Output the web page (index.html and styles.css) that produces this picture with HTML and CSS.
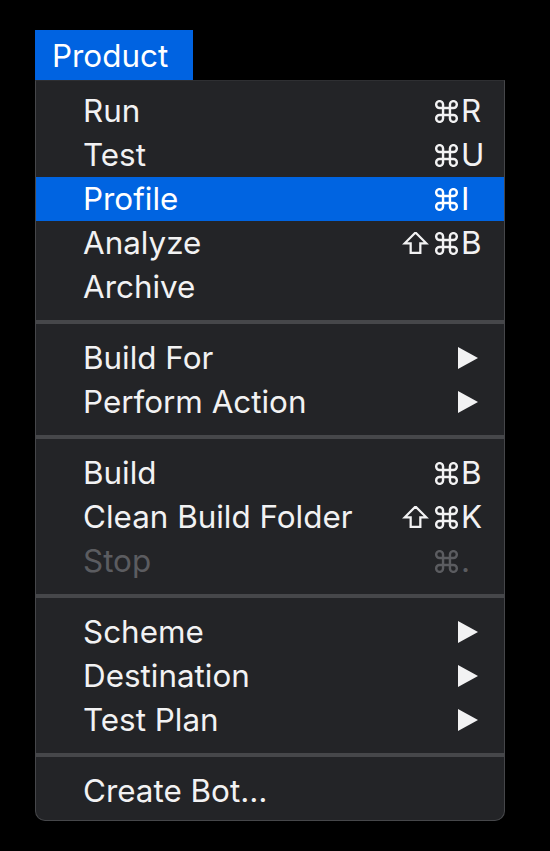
FILE: index.html
```html
<!DOCTYPE html>
<html lang="en">
<head>
<meta charset="utf-8">
<title>Product menu</title>
<link rel="stylesheet" href="styles.css">
</head>
<body>
<div class="screen">
  <div class="menubar">
    <div class="menu-title">Product</div>
  </div>
  <div class="menu">
    <div class="group">
      <div class="item"><span class="label">Run</span><span class="mod"></span><span class="mod"><svg class="cmd" viewBox="2 2 20 20"><path d="M9 9V6a3 3 0 1 0-3 3H18a3 3 0 1 0-3-3V18a3 3 0 1 0 3-3H6a3 3 0 1 0 3 3Z"/></svg></span><span class="key">R</span></div>
      <div class="item"><span class="label">Test</span><span class="mod"></span><span class="mod"><svg class="cmd" viewBox="2 2 20 20"><path d="M9 9V6a3 3 0 1 0-3 3H18a3 3 0 1 0-3-3V18a3 3 0 1 0 3-3H6a3 3 0 1 0 3 3Z"/></svg></span><span class="key">U</span></div>
      <div class="item selected"><span class="label">Profile</span><span class="mod"></span><span class="mod"><svg class="cmd" viewBox="2 2 20 20"><path d="M9 9V6a3 3 0 1 0-3 3H18a3 3 0 1 0-3-3V18a3 3 0 1 0 3-3H6a3 3 0 1 0 3 3Z"/></svg></span><span class="key">I</span></div>
      <div class="item"><span class="label">Analyze</span><span class="mod"><svg class="shift" viewBox="1 1 22 20.5"><path d="M12 1.5 22 11.5H16.5V20.5H7.5V11.5H2Z"/></svg></span><span class="mod"><svg class="cmd" viewBox="2 2 20 20"><path d="M9 9V6a3 3 0 1 0-3 3H18a3 3 0 1 0-3-3V18a3 3 0 1 0 3-3H6a3 3 0 1 0 3 3Z"/></svg></span><span class="key">B</span></div>
      <div class="item"><span class="label">Archive</span></div>
    </div>
    <div class="separator"></div>
    <div class="group">
      <div class="item"><span class="label">Build For</span><span class="submenu"><svg class="arrow" viewBox="0 0 20 22"><path d="M0 0 20 11 0 22Z"/></svg></span></div>
      <div class="item"><span class="label">Perform Action</span><span class="submenu"><svg class="arrow" viewBox="0 0 20 22"><path d="M0 0 20 11 0 22Z"/></svg></span></div>
    </div>
    <div class="separator"></div>
    <div class="group">
      <div class="item"><span class="label">Build</span><span class="mod"></span><span class="mod"><svg class="cmd" viewBox="2 2 20 20"><path d="M9 9V6a3 3 0 1 0-3 3H18a3 3 0 1 0-3-3V18a3 3 0 1 0 3-3H6a3 3 0 1 0 3 3Z"/></svg></span><span class="key">B</span></div>
      <div class="item"><span class="label">Clean Build Folder</span><span class="mod"><svg class="shift" viewBox="1 1 22 20.5"><path d="M12 1.5 22 11.5H16.5V20.5H7.5V11.5H2Z"/></svg></span><span class="mod"><svg class="cmd" viewBox="2 2 20 20"><path d="M9 9V6a3 3 0 1 0-3 3H18a3 3 0 1 0-3-3V18a3 3 0 1 0 3-3H6a3 3 0 1 0 3 3Z"/></svg></span><span class="key">K</span></div>
      <div class="item disabled"><span class="label">Stop</span><span class="mod"></span><span class="mod"><svg class="cmd" viewBox="2 2 20 20"><path d="M9 9V6a3 3 0 1 0-3 3H18a3 3 0 1 0-3-3V18a3 3 0 1 0 3-3H6a3 3 0 1 0 3 3Z"/></svg></span><span class="key">.</span></div>
    </div>
    <div class="separator"></div>
    <div class="group">
      <div class="item"><span class="label">Scheme</span><span class="submenu"><svg class="arrow" viewBox="0 0 20 22"><path d="M0 0 20 11 0 22Z"/></svg></span></div>
      <div class="item"><span class="label">Destination</span><span class="submenu"><svg class="arrow" viewBox="0 0 20 22"><path d="M0 0 20 11 0 22Z"/></svg></span></div>
      <div class="item"><span class="label">Test Plan</span><span class="submenu"><svg class="arrow" viewBox="0 0 20 22"><path d="M0 0 20 11 0 22Z"/></svg></span></div>
    </div>
    <div class="separator"></div>
    <div class="group">
      <div class="item"><span class="label">Create Bot…</span></div>
    </div>
  </div>
</div>
</body>
</html>
```
FILE: styles.css
```css
html, body {
  margin: 0;
  padding: 0;
  background: #000;
}

.screen {
  width: 550px;
  height: 851px;
  padding: 30px 0 0 35px;
  box-sizing: border-box;
  font-family: Inter, "Liberation Sans", sans-serif;
  font-size: 31.4px;
  color: #f2f2f3;
}

.menubar {
  display: flex;
}

.menu-title {
  width: 158px;
  height: 50px;
  box-sizing: border-box;
  padding: 1px 0 0 17px;
  background: #0063e1;
  color: #fff;
  display: flex;
  align-items: center;
}

.menu {
  width: 470px;
  box-sizing: border-box;
  background: #232427;
  border: 1px solid #46474a;
  border-top-color: #2e2f32;
  border-radius: 0 0 10px 10px;
  padding: 8px 0 7px;
}

.item {
  height: 44px;
  display: grid;
  grid-template-columns: 1fr 32px 30px 30px;
  align-items: center;
  padding: 0 13px 0 47px;
}

.item.selected {
  background: #0064e1;
  color: #fff;
}

.item.disabled {
  color: #5b5c60;
}

.label {
  white-space: nowrap;
  line-height: 1;
  padding-top: 2px;
}

.key {
  line-height: 1;
  padding-top: 2px;
}

.mod {
  display: flex;
  align-items: center;
  justify-content: center;
  height: 100%;
}

.submenu {
  grid-column: 3 / span 2;
  display: flex;
  justify-content: flex-end;
  padding-right: 13px;
}

.cmd {
  width: 27px;
  height: 23px;
  fill: none;
  stroke: currentColor;
  stroke-width: 2.1;
}

.shift {
  width: 27px;
  height: 22px;
  fill: none;
  stroke: currentColor;
  stroke-width: 2.1;
  stroke-linejoin: miter;
}

.arrow {
  width: 20px;
  height: 22px;
  fill: currentColor;
}

.separator {
  height: 4px;
  margin: 11px 0 12px;
  background: #46474a;
}
```
